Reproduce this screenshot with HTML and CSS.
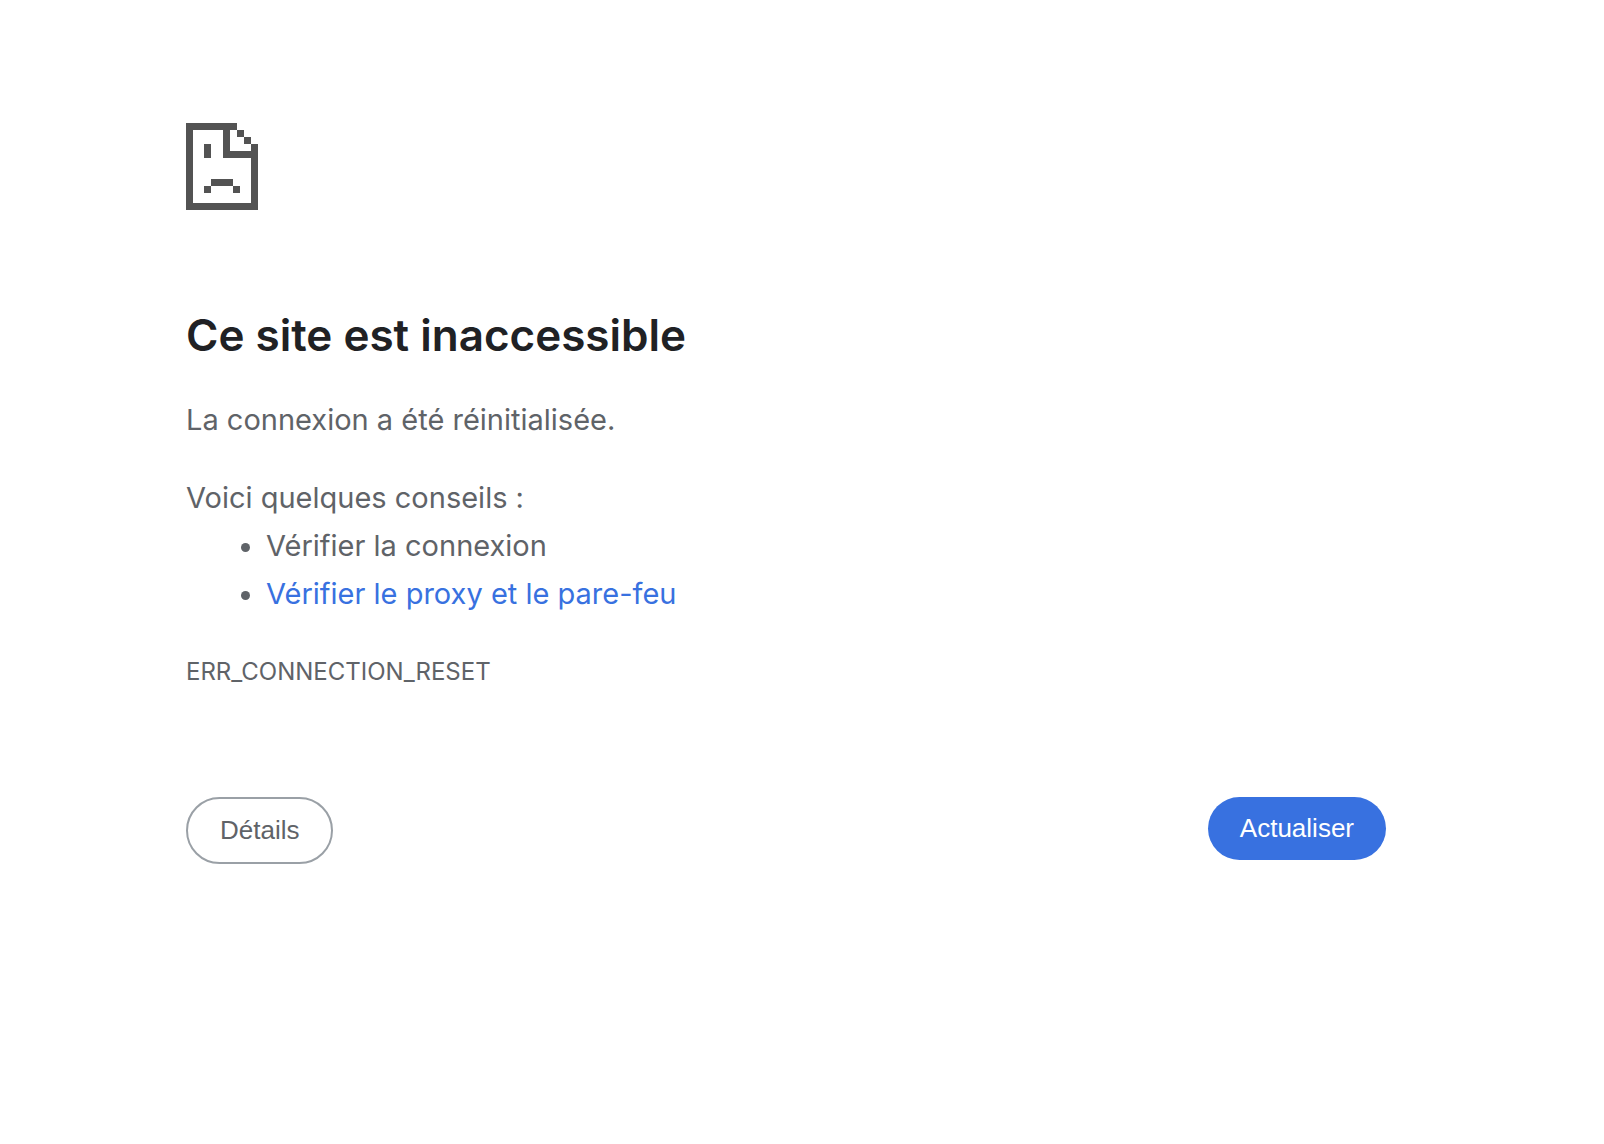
FILE: index.html
```html
<!DOCTYPE html>
<html lang="fr">
<head>
    <meta charset="UTF-8">
    <meta name="viewport" content="width=device-width, initial-scale=1.0">
    <title>Ce site est inaccessible</title>
    <link rel="stylesheet" href="styles.css">
</head>
<body>
    <main class="interstitial">
        <svg class="icon" viewBox="0 0 72 87" width="72" height="87" fill="currentColor" shape-rendering="crispEdges" aria-hidden="true">
            <!-- page outline and folded corner -->
            <path d="M0 0h51v7h-7v21h28v59H0zM7 7v73h58V35H37V7z" fill-rule="evenodd"/>
            <path d="M51 7h7v7h-7zM58 14h7v7h-7zM65 21h7v7h-7z"/>
            <!-- sad face -->
            <path d="M18 21h7v14h-7zM25 56h22v7H25zM18 63h7v7h-7zM47 63h7v7h-7z"/>
        </svg>

        <h1>Ce site est inaccessible</h1>
        <p>La connexion a été réinitialisée.</p>

        <div class="suggestions">
            <p>Voici quelques conseils :</p>
            <ul>
                <li>Vérifier la connexion</li>
                <li><a href="#buttons">Vérifier le proxy et le pare-feu</a></li>
            </ul>
        </div>

        <div class="error-code">ERR_CONNECTION_RESET</div>

        <div class="nav-wrapper" id="buttons">
            <button type="button" class="details-button">Détails</button>
            <button type="button" class="reload-button">Actualiser</button>
        </div>
    </main>
</body>
</html>
```
FILE: styles.css
```css
body {
    margin: 0;
    background: #fff;
    color: #5f6368;
    font-family: Inter, "Liberation Sans", sans-serif;
    font-size: 29px;
    line-height: 48px;
}
.interstitial {
    padding: 123px 218px 0 186px;
}
.icon {
    display: block;
    color: #535353;
}
h1 {
    margin: 96px 0 32px;
    color: #202124;
    font-size: 44px;
    font-weight: 600;
    line-height: 58px;
}
p {
    margin: 0;
}
.suggestions {
    margin: 30px 0;
}
ul {
    margin: 0;
    padding-left: 80px;
}
a {
    color: #3871e0;
    text-decoration: none;
}
.error-code {
    font-size: 24px;
}
.nav-wrapper {
    display: flex;
    justify-content: space-between;
    align-items: flex-start;
    margin-top: 101px;
}
button {
    padding: 16px 32px;
    border: 0;
    border-radius: 34px;
    font-family: "Liberation Sans", Arial, sans-serif;
    font-size: 26px;
    line-height: 31px;
    cursor: pointer;
}
.details-button {
    border: 2px solid #9aa0a6;
    background: #fff;
    color: #5f6368;
}
.reload-button {
    background: #3871e0;
    color: #fff;
}
```
